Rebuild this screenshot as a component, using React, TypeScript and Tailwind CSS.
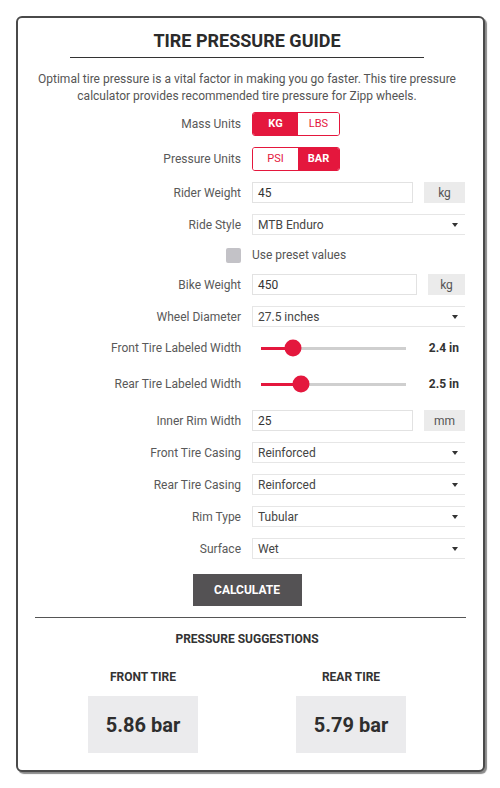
import React from 'react';

const RED = '#e4173d';

function Row({ label, children, h = 'h-[21px]' }: { label: React.ReactNode; children: React.ReactNode; h?: string }) {
  return (
    <div className={`flex items-center ${h}`}>
      <div className="w-[223px] shrink-0 text-right text-[12px] text-[#595959]">{label}</div>
      <div className="ml-[11px] flex items-center">{children}</div>
    </div>
  );
}

function Toggle({ left, right, active }: { left: string; right: string; active: 'left' | 'right' }) {
  const on = 'bg-[#e4173d] text-white font-bold';
  const off = 'bg-white text-[#e4173d]';
  return (
    <div className="flex h-[24px] w-[88px] overflow-hidden rounded-[3px] border border-[#e4173d] text-[11px]">
      <div className={`flex w-[45px] items-center justify-center ${active === 'left' ? on : off}`}>{left}</div>
      <div className={`flex flex-1 items-center justify-center ${active === 'right' ? on : off}`}>{right}</div>
    </div>
  );
}

function NumberInput({ value, unit, w, uw }: { value: string; unit: string; w: string; uw: string }) {
  return (
    <div className="flex h-[21px] items-center">
      <div className={`flex h-full items-center border border-[#e2e2e2] pl-[5px] text-[12px] text-[#333] ${w}`}>{value}</div>
      <div className={`ml-[11px] flex h-full items-center justify-center bg-[#ebebeb] text-[12px] text-[#555] ${uw}`}>{unit}</div>
    </div>
  );
}

function Select({ value }: { value: string }) {
  return (
    <div className="flex h-[21px] w-[213px] items-center justify-between border-y border-l border-[#e6e6e6] pl-[5px] pr-[7px] text-[12px] text-[#444]">
      <span>{value}</span>
      <svg width="6" height="4" viewBox="0 0 6 4"><path d="M0 0h6L3 4z" fill="#333" /></svg>
    </div>
  );
}

function Slider({ pos, value }: { pos: number; value: string }) {
  return (
    <div className="flex w-[207px] items-center">
      <div className="relative ml-[9px] h-[3px] w-[145px] bg-[#cfcfcf]">
        <div className="absolute left-0 top-0 h-full" style={{ width: pos, background: RED }} />
        <div
          className="absolute top-1/2 h-[17px] w-[17px] -translate-x-1/2 -translate-y-1/2 rounded-full"
          style={{ left: pos, background: RED }}
        />
      </div>
      <div className="ml-auto text-[12px] font-bold text-[#333]">{value}</div>
    </div>
  );
}

export default function App() {
  return (
    <div className="min-h-[788px] bg-white pl-[16px] pt-[16px]" style={{ fontFamily: 'Roboto, "Liberation Sans", sans-serif' }}>
      <div className="w-[469px] rounded-[6px] border-2 border-[#4a4a4a] bg-white pb-[17px] pt-[11px] shadow-[2px_2px_1px_#8a8a8a]">
        <div className="pr-[7px]">
          <h1 className="mx-auto w-[354px] border-b border-[#333] pb-[4px] text-center text-[18px] font-bold leading-[24px] text-[#2b2b2b]">
            TIRE PRESSURE GUIDE
          </h1>
          <p className="mt-[13px] px-[10px] text-center text-[12px] leading-[17px] text-[#555]">
            Optimal tire pressure is a vital factor in making you go faster. This tire pressure calculator provides recommended tire pressure for Zipp wheels.
          </p>
        </div>

        <div className="mt-[7px] flex flex-col gap-[11px]">
          <Row label="Mass Units" h="h-[24px]">
            <Toggle left="KG" right="LBS" active="left" />
          </Row>
          <Row label="Pressure Units" h="h-[24px]">
            <Toggle left="PSI" right="BAR" active="right" />
          </Row>
          <Row label="Rider Weight">
            <NumberInput value="45" unit="kg" w="w-[161px]" uw="w-[41px]" />
          </Row>
          <Row label="Ride Style">
            <Select value="MTB Enduro" />
          </Row>
          <Row
            h="h-[17px]"
            label={<span className="ml-auto inline-block h-[15px] w-[15px] rounded-[2px] bg-[#c3c2c7] align-middle" />}
          >
            <span className="text-[12px] text-[#555]">Use preset values</span>
          </Row>
          <Row label="Bike Weight">
            <NumberInput value="450" unit="kg" w="w-[165px]" uw="w-[37px]" />
          </Row>
          <Row label="Wheel Diameter">
            <Select value="27.5 inches" />
          </Row>
          <Row label="Front Tire Labeled Width" h="h-[20px]">
            <Slider pos={32} value="2.4 in" />
          </Row>
          <Row label="Rear Tire Labeled Width" h="h-[30px]">
            <Slider pos={40} value="2.5 in" />
          </Row>
          <Row label="Inner Rim Width">
            <NumberInput value="25" unit="mm" w="w-[161px]" uw="w-[41px]" />
          </Row>
          <Row label="Front Tire Casing">
            <Select value="Reinforced" />
          </Row>
          <Row label="Rear Tire Casing">
            <Select value="Reinforced" />
          </Row>
          <Row label="Rim Type">
            <Select value="Tubular" />
          </Row>
          <Row label="Surface">
            <Select value="Wet" />
          </Row>
        </div>

        <div className="mt-[15px] flex justify-center pr-[7px]">
          <button className="h-[32px] w-[109px] bg-[#545254] text-[12px] font-bold text-white">CALCULATE</button>
        </div>

        <div className="mx-[17px] mt-[11px] border-t border-[#555]" />

        <div className="pr-[7px]">
          <div className="mt-[12px] text-center text-[12px] font-bold text-[#333]">PRESSURE SUGGESTIONS</div>
          <div className="ml-[21px] mt-[22px] flex w-[416px]">
            {[
              ['FRONT TIRE', '5.86 bar'],
              ['REAR TIRE', '5.79 bar'],
            ].map(([t, v]) => (
              <div key={t} className="flex w-[208px] flex-col items-center">
                <div className="text-[12px] font-bold leading-[14px] text-[#333]">{t}</div>
                <div className="mt-[12px] flex h-[57px] w-[110px] items-center justify-center bg-[#ebebed] text-[20px] font-bold text-[#2e2e2e]">
                  {v}
                </div>
              </div>
            ))}
          </div>
        </div>
      </div>
    </div>
  );
}
